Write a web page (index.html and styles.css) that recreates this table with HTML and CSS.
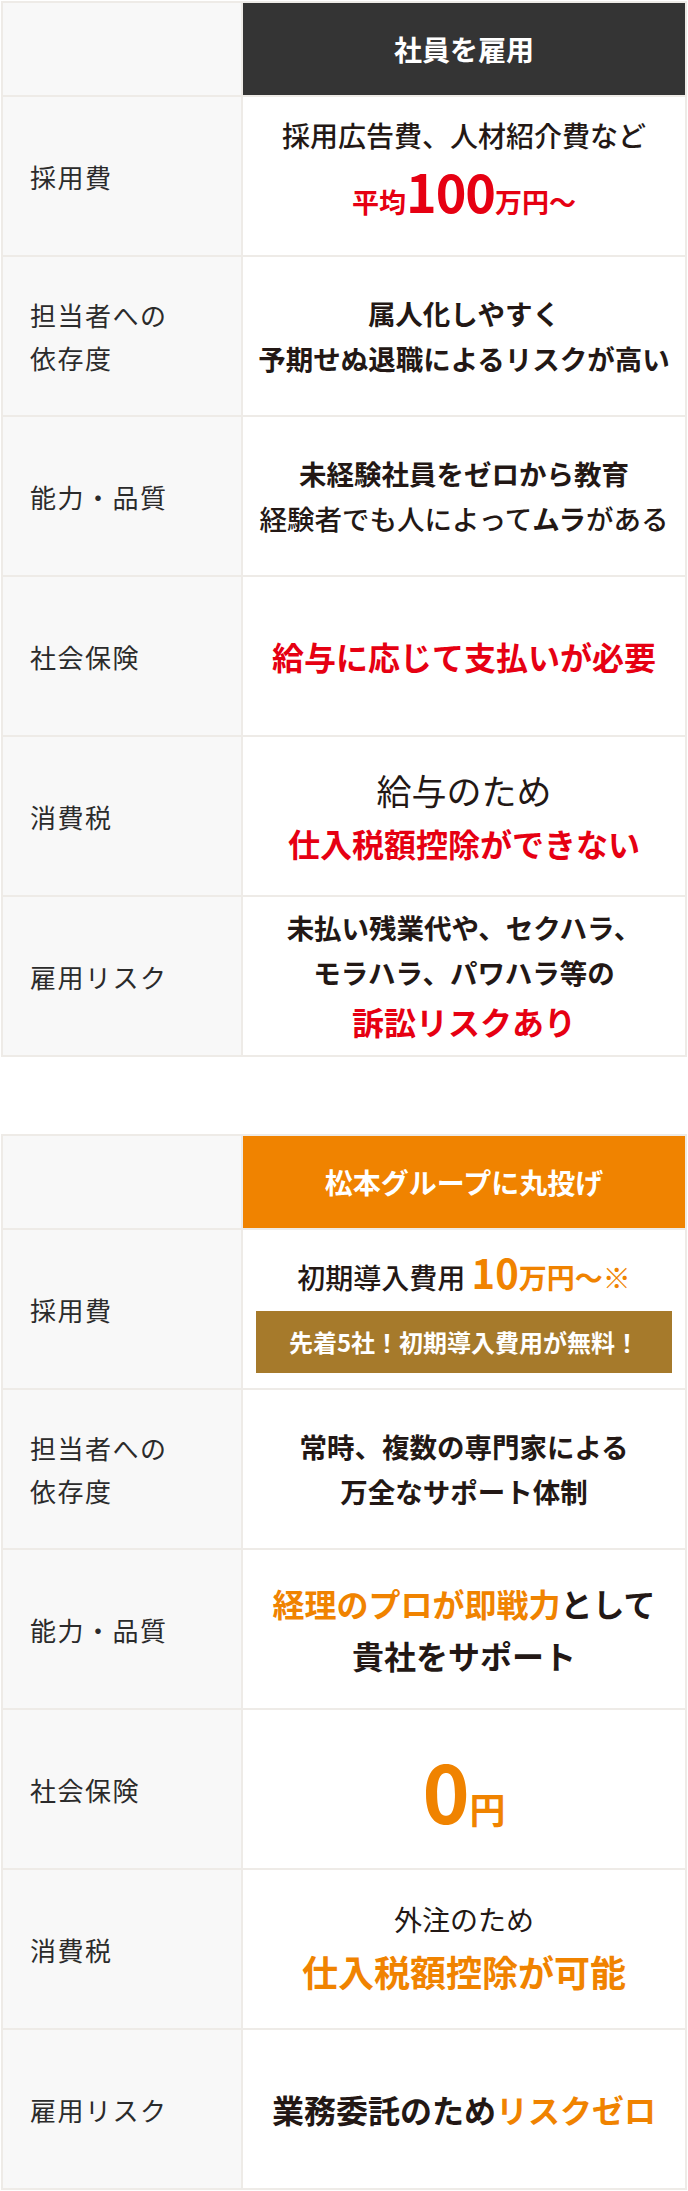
FILE: index.html
```html
<!DOCTYPE html>
<html lang="ja">
<head>
<meta charset="utf-8">
<title>比較表</title>
<link rel="stylesheet" href="styles.css">
</head>
<body>
<div class="page">
  <div class="compare">
    <div class="cell label empty"></div>
    <div class="cell head head-dark">社員を雇用</div>

    <div class="cell label">採用費</div>
    <div class="cell body">
      <p class="med">採用広告費、人材紹介費など</p>
      <p class="red bold price"><span class="unit">平均</span><span class="num">100</span><span class="unit">万円〜</span></p>
    </div>

    <div class="cell label">担当者への<br>依存度</div>
    <div class="cell body">
      <p class="bold lh">属人化しやすく<br>予期せぬ退職によるリスクが高い</p>
    </div>

    <div class="cell label">能力・品質</div>
    <div class="cell body">
      <p class="med lh"><b>未経験社員をゼロから教育</b><br>経験者でも人によって<b>ムラ</b>がある</p>
    </div>

    <div class="cell label">社会保険</div>
    <div class="cell body">
      <p class="red bold big">給与に応じて支払いが必要</p>
    </div>

    <div class="cell label">消費税</div>
    <div class="cell body">
      <p class="light xl">給与のため</p>
      <p class="red bold big">仕入税額控除ができない</p>
    </div>

    <div class="cell label">雇用リスク</div>
    <div class="cell body">
      <p class="bold lh">未払い残業代や、セクハラ、<br>モラハラ、パワハラ等の</p>
      <p class="red bold big">訴訟リスクあり</p>
    </div>
  </div>

  <div class="compare second">
    <div class="cell label empty"></div>
    <div class="cell head head-orange">松本グループに丸投げ</div>

    <div class="cell label">採用費</div>
    <div class="cell body">
      <p class="med initial">初期導入費用 <span class="orange bold num2">10</span><span class="orange bold">万円〜</span><span class="orange note">※</span></p>
      <div class="campaign">先着5社！初期導入費用が無料！</div>
    </div>

    <div class="cell label">担当者への<br>依存度</div>
    <div class="cell body">
      <p class="bold lh">常時、複数の専門家による<br>万全なサポート体制</p>
    </div>

    <div class="cell label">能力・品質</div>
    <div class="cell body">
      <p class="bold big"><span class="orange">経理のプロが即戦力</span>として<br>貴社をサポート</p>
    </div>

    <div class="cell label">社会保険</div>
    <div class="cell body">
      <p class="orange bold zero"><span class="num0">0</span><span class="yen">円</span></p>
    </div>

    <div class="cell label">消費税</div>
    <div class="cell body">
      <p class="light">外注のため</p>
      <p class="orange bold xxl">仕入税額控除が可能</p>
    </div>

    <div class="cell label">雇用リスク</div>
    <div class="cell body">
      <p class="bold big">業務委託のため<span class="orange">リスクゼロ</span></p>
    </div>
  </div>
</div>
</body>
</html>
```

FILE: styles.css
```css
* { box-sizing: border-box; }
html, body { margin: 0; padding: 0; background: #ffffff; }
body {
  font-family: "Noto Sans CJK JP", "Noto Sans", sans-serif;
  color: #231815;
}
.page {
  padding: 1px 1px 0 1px;
  display: flex;
  flex-direction: column;
  gap: 77px;
}
.compare {
  display: grid;
  grid-template-columns: 238px 1fr;
  grid-template-rows: 92px;
  grid-auto-rows: 158px;
  gap: 2px;
  padding: 2px;
  background: #eeebe7;
}
.cell { background: #ffffff; }
.label {
  background: #f8f8f8;
  display: flex;
  align-items: center;
  padding-left: 27px;
  font-size: 26px;
  letter-spacing: 1.5px;
  line-height: 43px;
  font-weight: 400;
  color: #2b2b2b;
}
.head {
  display: flex;
  align-items: center;
  justify-content: center;
  color: #ffffff;
  font-size: 28px;
  font-weight: 700;
}
.head-dark { background: #343434; }
.head-orange { background: #f08300; }
.body {
  display: flex;
  flex-direction: column;
  align-items: stretch;
  justify-content: center;
  text-align: center;
  padding: 0 6px;
}
.body p { margin: 0; white-space: nowrap; }
.light { font-size: 28px; font-weight: 400; line-height: 44px; }
.med { font-size: 28px; font-weight: 500; line-height: 45px; }
.med b { font-weight: 700; }
.bold { font-weight: 700; }
.lh { font-size: 27.5px; line-height: 45px; }
.big { font-size: 32px; line-height: 52px; }
.xl { font-size: 35px; line-height: 54px; }
.xxl { font-size: 36px; line-height: 60px; }
.red { color: #e60012; }
.orange { color: #f08300; }
.price { line-height: 66px; }
.price .unit { font-size: 27px; }
.price .num { font-size: 52px; letter-spacing: -1px; }
.initial { line-height: 52px; }
.num2 { font-size: 40px; }
.note { font-size: 28px; font-weight: 400; }
.campaign {
  margin: 8px 7px 0;
  background: #a67a2b;
  color: #ffffff;
  font-size: 24px;
  font-weight: 700;
  height: 62px;
  display: flex;
  align-items: center;
  justify-content: center;
}
.zero { line-height: 1; display: flex; justify-content: center; align-items: baseline; }
.num0 { font-size: 80px; }
.yen { font-size: 36px; }
```
